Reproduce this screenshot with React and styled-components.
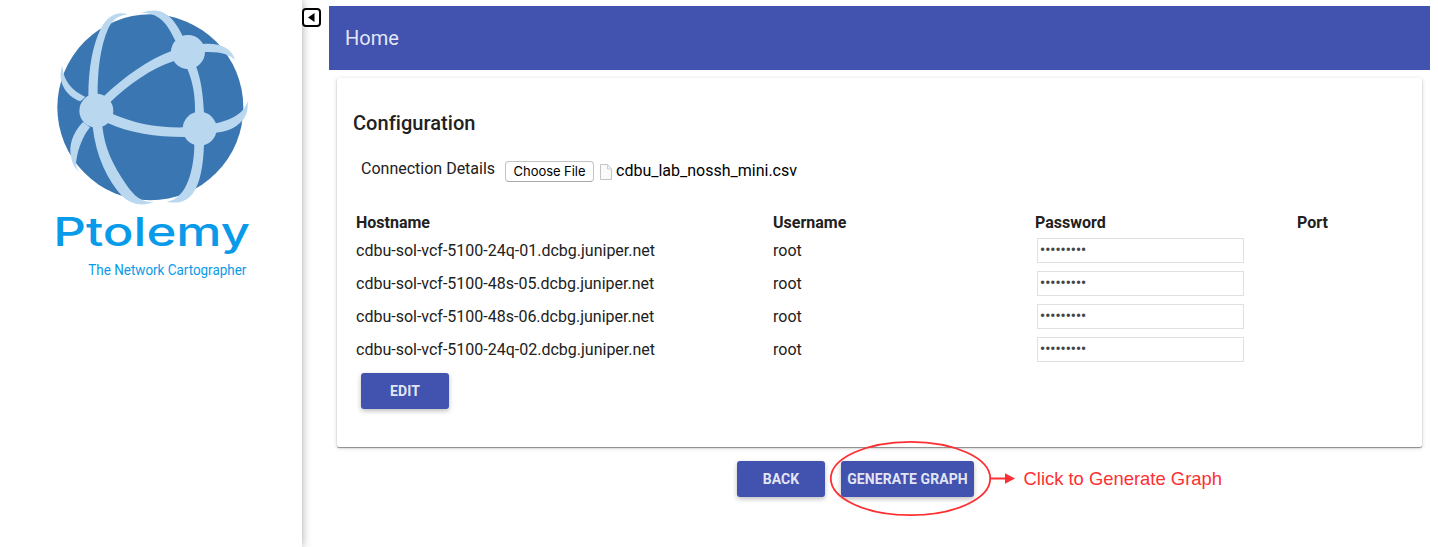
import React from 'react';
import styled, { createGlobalStyle } from 'styled-components';

const GlobalStyle = createGlobalStyle`
  * { box-sizing: border-box; }
  body {
    margin: 0;
    background: #fff;
    color: #212121;
    font-family: Roboto, "Liberation Sans", sans-serif;
    overflow: hidden;
  }
`;

const Page = styled.div`
  display: flex;
  height: 547px;
`;

const Sidebar = styled.aside`
  width: 302px;
  flex: none;
  padding-left: 40px;
  background: #fff;
  box-shadow: 0 0 9px rgba(0, 0, 0, 0.35);
`;

const LogoArt = styled.svg`
  display: block;
  width: 230px;
  height: 290px;
  overflow: visible;
`;

const LogoText = styled.text`
  font-family: ${(p) => p.$family};
  font-size: ${(p) => p.$size}px;
  font-weight: ${(p) => p.$weight || 400};
  fill: #0a9aea;
`;

const Gutter = styled.div`
  width: 27px;
  flex: none;
  padding-top: 8px;
`;

const Toggle = styled.button`
  display: flex;
  align-items: center;
  justify-content: center;
  width: 19px;
  height: 19px;
  padding: 0;
  border: 2px solid #000;
  border-radius: 4px;
  background: #fff;
  position: relative;
`;

const Main = styled.main`
  flex: 1;
  min-width: 0;
  padding: 6px 8px 0 0;
`;

const TitleBar = styled.header`
  display: flex;
  align-items: center;
  height: 64px;
  padding-left: 16px;
  background: #4253af;
  color: rgba(255, 255, 255, 0.87);
  font-size: 20px;
`;

const Card = styled.section`
  height: 369px;
  margin: 8px 8px 0;
  padding: 31px 16px 0;
  border-radius: 2px;
  background: #fff;
  box-shadow: 0 1px 1px rgba(0, 0, 0, 0.4), 0 1px 4px rgba(0, 0, 0, 0.18);
`;

const Heading = styled.h2`
  margin: 0;
  font-size: 20px;
  line-height: 28px;
  font-weight: 500;
  letter-spacing: 0.05px;
`;

const FileRow = styled.div`
  display: flex;
  align-items: flex-start;
  height: 30px;
  margin-top: 21px;
  padding-left: 8px;
  font-size: 16px;
  line-height: 22px;
`;

const FieldLabel = styled.label`
  width: 144px;
`;

const FileButton = styled.button`
  width: 89px;
  height: 21px;
  margin-top: 3px;
  padding: 0;
  border: 1px solid #c3c3c3;
  border-bottom-color: #aaa;
  border-radius: 4px;
  background: #fff;
  color: #000;
  font: 13px/19px Inter, sans-serif;
  letter-spacing: -0.05px;
`;

const FileIcon = styled.svg`
  width: 12px;
  height: 16px;
  margin: 6px 4px 0 6px;
`;

const FileName = styled.span`
  margin-top: 2px;
  color: #000;
`;

const Grid = styled.div`
  display: grid;
  grid-template-columns: 417px 262px 262px 1fr;
  align-items: center;
  padding-left: 3px;
  font-size: 16px;
`;

const HeadRow = styled(Grid)`
  height: 22px;
  margin-top: 23px;
  margin-bottom: 1px;
  font-weight: 700;
`;

const DataRow = styled(Grid)`
  height: 33px;
`;

const PasswordInput = styled.input`
  width: 207px;
  height: 25px;
  margin-left: 2px;
  padding: 0 2px 1px;
  border: 1px solid #e0e0e0;
  background: #fff;
  color: #444;
  font: 700 14px Roboto, sans-serif;
  letter-spacing: 0.1px;
  outline: none;
`;

const Button = styled.button`
  width: ${(p) => p.$width || 88}px;
  height: 36px;
  padding: 0;
  border: 0;
  border-radius: 3px;
  background: #4253af;
  color: rgba(255, 255, 255, 0.87);
  font: 700 14px Roboto, sans-serif;
  letter-spacing: 0.08px;
  text-transform: uppercase;
  white-space: nowrap;
  box-shadow: 0 2px 5px rgba(0, 0, 0, 0.26);
`;

const EditArea = styled.div`
  padding: 7px 0 0 8px;
`;

const Actions = styled.div`
  display: flex;
  gap: 16px;
  padding: 14px 0 0 408px;
`;

const Target = styled.div`
  position: relative;
`;

const Callout = styled.svg`
  position: absolute;
  left: -12px;
  top: -21px;
  width: 400px;
  height: 78px;
  pointer-events: none;
`;

const CalloutText = styled.text`
  font-family: "Liberation Sans", Arial, sans-serif;
  font-size: 18.6px;
  fill: #fd2f33;
`;

const hosts = [
  'cdbu-sol-vcf-5100-24q-01.dcbg.juniper.net',
  'cdbu-sol-vcf-5100-48s-05.dcbg.juniper.net',
  'cdbu-sol-vcf-5100-48s-06.dcbg.juniper.net',
  'cdbu-sol-vcf-5100-24q-02.dcbg.juniper.net',
];

function Logo() {
  return (
    <LogoArt viewBox="0 0 690 870">
      <circle cx="331" cy="322" r="279" fill="#3a76b1" />
      <g fill="#b9d8f0">
        <path d="M145 290C145 200 160 130 183 85C202 48 230 33 264 43C226 46 213 70 205 85C180 140 172 220 173 290Z" />
        <path d="M188 292C255 229 320 181 400 151L402 183C330 207 268 252 208 309Z" />
        <path d="M406 122C388 84 365 38 305 38C360 20 395 38 430 112Z" />
        <path d="M488 132C538 128 575 142 585 180C562 158 535 156 488 156Z" />
        <path d="M440 202C460 248 466 290 465 340L492 340C489 280 483 240 468 198Z" />
        <path d="M216 341C280 369 350 384 434 382L435 411C345 411 270 399 203 369Z" />
        <path d="M522 371C575 361 617 336 622 302C631 350 595 392 526 398Z" />
        <path d="M463 432C463 495 445 598 380 605C440 618 487 590 492 432Z" />
        <path d="M158 380C168 470 203 540 246 588C275 615 308 619 342 606C305 607 285 592 258 553C218 494 194 445 187 378Z" />
        <path d="M129 366C96 400 86 440 93 468C96 492 106 507 119 516C108 503 106 491 109 482C114 445 130 405 150 382Z" />
        <path d="M67 197C50 240 75 287 121 304L136 291C95 270 70 243 67 197Z" />
        <circle cx="169" cy="332" r="51" />
        <circle cx="444" cy="156" r="51" />
        <circle cx="479" cy="386" r="51" />
      </g>
      <LogoText $family='Inter, sans-serif' $size={117} $weight={500} x="40" y="737" textLength="590" lengthAdjust="spacingAndGlyphs">
        Ptolemy
      </LogoText>
      <LogoText $family='Roboto, sans-serif' $size={45} x="145" y="825" textLength="474" lengthAdjust="spacingAndGlyphs">
        The Network Cartographer
      </LogoText>
    </LogoArt>
  );
}

export default function App() {
  return (
    <>
      <GlobalStyle />
      <Page>
        <Sidebar>
          <Logo />
        </Sidebar>
        <Gutter>
          <Toggle aria-label="Collapse sidebar">
            <svg width="7" height="9" viewBox="0 0 7 9">
              <path d="M0 4.5L6.5 0V9Z" fill="#000" />
            </svg>
          </Toggle>
        </Gutter>
        <Main>
          <TitleBar>Home</TitleBar>
          <Card>
            <Heading>Configuration</Heading>
            <FileRow>
              <FieldLabel>Connection Details</FieldLabel>
              <FileButton>Choose File</FileButton>
              <FileIcon viewBox="0 0 12 16">
                <path d="M.5.5H7.5L11.5 5V15.5H.5Z" fill="#fafafa" stroke="#c4c4c4" />
                <path d="M7.5.5V5H11.5" fill="none" stroke="#cfcfcf" />
              </FileIcon>
              <FileName>cdbu_lab_nossh_mini.csv</FileName>
            </FileRow>
            <HeadRow>
              <span>Hostname</span>
              <span>Username</span>
              <span>Password</span>
              <span>Port</span>
            </HeadRow>
            {hosts.map((host) => (
              <DataRow key={host}>
                <span>{host}</span>
                <span>root</span>
                <PasswordInput type="password" readOnly value="password1" />
              </DataRow>
            ))}
            <EditArea>
              <Button>Edit</Button>
            </EditArea>
          </Card>
          <Actions>
            <Button>Back</Button>
            <Target>
              <Button $width={133}>Generate Graph</Button>
              <Callout viewBox="0 0 400 78">
                <ellipse cx="81.5" cy="38.5" rx="79.7" ry="36.7" fill="none" stroke="#fd2f33" strokeWidth="1.8" />
                <path d="M161 38.5H178" stroke="#fd2f33" strokeWidth="2" />
                <path d="M176 33.3L186 38.5L176 43.7Z" fill="#fd2f33" />
                <CalloutText x="194.5" y="45" textLength="198.5" lengthAdjust="spacingAndGlyphs">
                  Click to Generate Graph
                </CalloutText>
              </Callout>
            </Target>
          </Actions>
        </Main>
      </Page>
    </>
  );
}
